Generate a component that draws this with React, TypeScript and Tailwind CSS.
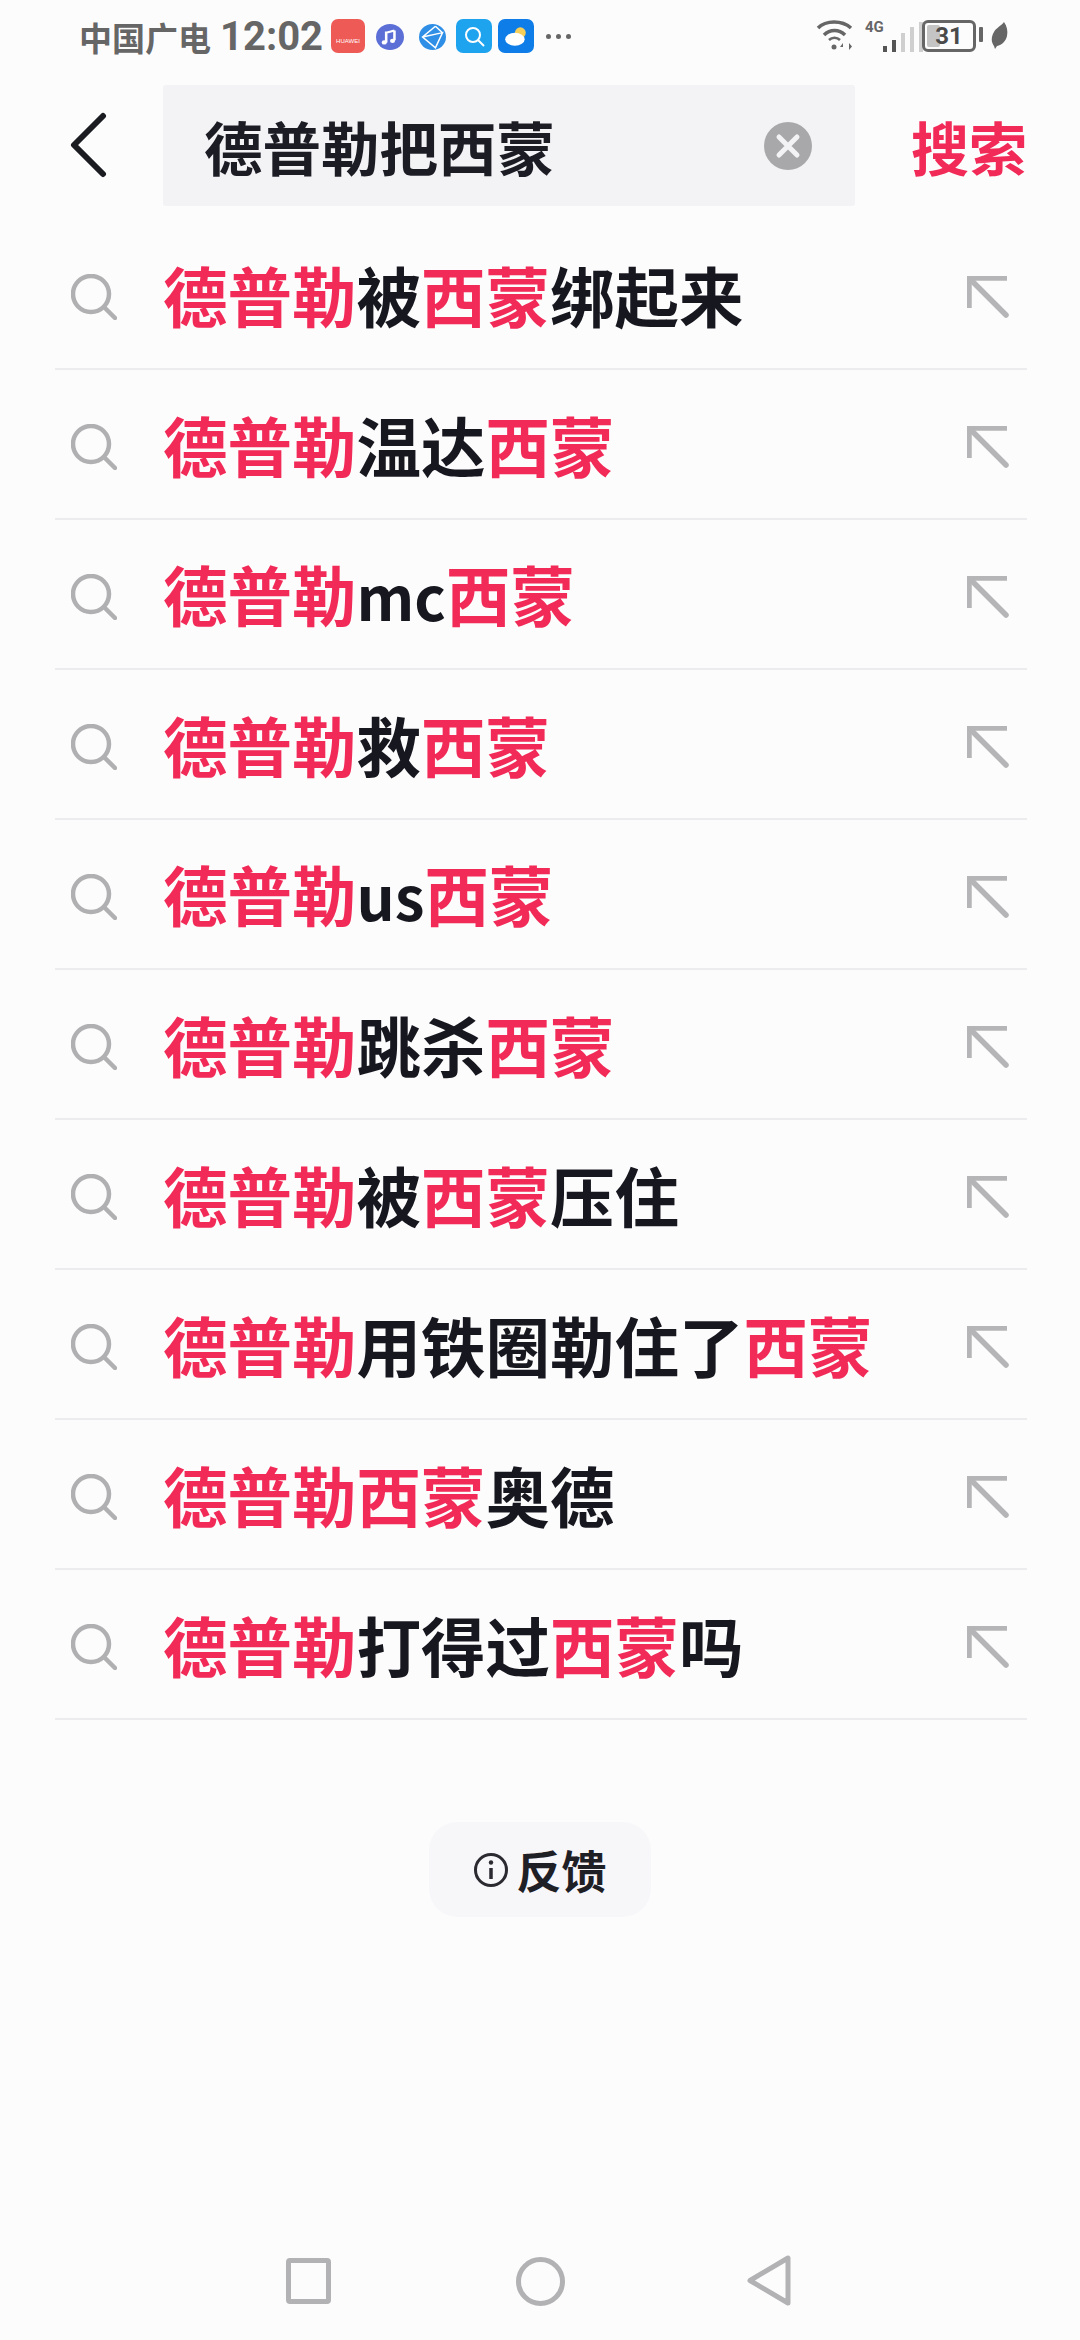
import React from "react";

const FONT = "[font-family:'Noto_Sans_CJK_SC','Noto_Sans',sans-serif]";

type Seg = [string, boolean];
const rows: Seg[][] = [
  [["德普勒", true], ["被", false], ["西蒙", true], ["绑起来", false]],
  [["德普勒", true], ["温达", false], ["西蒙", true]],
  [["德普勒", true], ["mc", false], ["西蒙", true]],
  [["德普勒", true], ["救", false], ["西蒙", true]],
  [["德普勒", true], ["us", false], ["西蒙", true]],
  [["德普勒", true], ["跳杀", false], ["西蒙", true]],
  [["德普勒", true], ["被", false], ["西蒙", true], ["压住", false]],
  [["德普勒", true], ["用铁圈勒住了", false], ["西蒙", true]],
  [["德普勒", true], ["西蒙", true], ["奥德", false]],
  [["德普勒", true], ["打得过", false], ["西蒙", true], ["吗", false]],
];

function StatusBar() {
  return (
    <div className="h-[85px] flex items-start pt-[19px] pl-[79px] pr-[72px] text-[#666666]">
      <span className="text-[33px] leading-[36px] font-bold w-[135px] whitespace-nowrap">中国广电</span>
      <span className="ml-[6px] text-[40px] leading-[36px] font-bold w-[111px] [font-family:'Roboto',sans-serif]">12:02</span>
      <div className="w-[34px] h-[34px] rounded-[7px] bg-[#ee5a55] flex items-end justify-center pb-[9px]">
        <span className="text-[6px] leading-[6px] text-white [font-family:'Liberation_Sans',sans-serif]">HUAWEI</span>
      </div>
      <svg className="ml-[11px] mt-[5px]" width="28" height="26" viewBox="0 0 22 24" preserveAspectRatio="none">
        <ellipse cx="11" cy="12" rx="11" ry="12" fill="#5b6fd6" />
        <path d="M8 7v10M14.5 6v9M8 8l6.500-2" stroke="#fff" strokeWidth="2" fill="none" />
        <circle cx="6.500" cy="17" r="2" fill="#fff" />
        <circle cx="13" cy="15.500" r="2" fill="#fff" />
      </svg>
      <svg className="ml-[15px] mt-[5px]" width="27" height="26" viewBox="0 0 23 24" preserveAspectRatio="none">
        <ellipse cx="11.500" cy="12" rx="11.500" ry="12" fill="#2f8fe6" />
        <path d="M14 2L3 12l11 10L20 8L3 12M14 2L20 8" stroke="#fff" strokeWidth="1.300" fill="none" />
      </svg>
      <div className="ml-[10px] w-[36px] h-[34px] rounded-[7px] bg-[#1ea3ee] flex items-center justify-center">
        <svg width="24" height="24" viewBox="0 0 22 24" fill="none" stroke="#fff" strokeWidth="2">
          <circle cx="10" cy="11" r="7" />
          <path d="M15 16l6 6" />
        </svg>
      </div>
      <div className="ml-[6px] w-[36px] h-[34px] rounded-[7px] bg-[#0e7de8] flex items-center justify-center">
        <svg width="28" height="26" viewBox="0 0 24 24">
          <circle cx="16" cy="9" r="5" fill="#f5cf5a" />
          <ellipse cx="11" cy="15" rx="9" ry="6" fill="#fff" />
        </svg>
      </div>
      <div className="ml-[12px] mt-[15px] flex gap-[5px]">
        <span className="w-[5px] h-[5px] rounded-full bg-[#666666]" />
        <span className="w-[5px] h-[5px] rounded-full bg-[#666666]" />
        <span className="w-[5px] h-[5px] rounded-full bg-[#666666]" />
      </div>
      <div className="flex-1" />
      <svg className="mr-[4px]" width="38" height="33" viewBox="0 0 38 33" fill="none" stroke="#666666" strokeWidth="3.500">
        <path d="M2 9C10 1 26 1 35 9" />
        <path d="M8 16C14 10 23 10 29 16" />
        <path d="M13 21C16 18 21 18 24 21" strokeWidth="2.500" />
        <circle cx="18" cy="28" r="2.500" fill="#666666" stroke="none" />
        <path d="M27 24l-3 4h3v3M33 24v7l3-3.500z" fill="#666666" stroke="none" />
      </svg>
      <div className="ml-[7px] relative w-[51px] h-[33px]">
        <span className="absolute left-0 top-0 text-[15px] leading-[16px] font-bold text-[#666666] [font-family:'Roboto',sans-serif]">4G</span>
        <div className="absolute left-[18px] bottom-0 flex items-end gap-[5px]">
          <span className="w-[4px] h-[6px] bg-[#555555]" />
          <span className="w-[4px] h-[12px] bg-[#555555]" />
          <span className="w-[4px] h-[19px] bg-[#cfcfcf]" />
          <span className="w-[4px] h-[25px] bg-[#cfcfcf]" />
          <span className="w-[4px] h-[30px] bg-[#cfcfcf]" />
        </div>
      </div>
      <div className="ml-[6px] w-[54px] h-[32px] border-[3px] border-[#666666] rounded-[6px] relative flex items-center justify-center mt-[1px]">
        <div className="absolute left-[2px] top-[2px] bottom-[2px] w-[13px] bg-[#c4c4c4] rounded-[2px]" />
        <span className="relative text-[24px] leading-[24px] font-bold text-[#4a4a4a] [font-family:'Roboto',sans-serif]">31</span>
      </div>
      <span className="ml-[3px] mt-[8px] w-[4px] h-[15px] rounded-[1px] bg-[#666666]" />
      <svg className="ml-[8px] mt-[3px]" width="17" height="27" viewBox="0 0 17 27">
        <path d="M13 0C16 4 17 9 16 14C15 19 11 23 6 24L4 27L3 24C0 20 0 15 3 10C5 6 10 4 13 0Z" fill="#666666" />
      </svg>
    </div>
  );
}

function Header() {
  return (
    <div className="h-[121px] flex items-center pl-[70px]">
      <svg className="w-[38px] h-[68px] shrink-0" viewBox="0 0 38 68" fill="none" stroke="#1b1c22" strokeWidth="6" strokeLinecap="round" strokeLinejoin="round">
        <path d="M33 4L4 33L33 62" />
      </svg>
      <div className="ml-[55px] w-[692px] h-[121px] bg-[#f3f2f5] rounded-[3px] flex items-center pl-[41px] pr-[43px]">
        <span className="flex-1 text-[58.500px] leading-[120px] font-bold text-[#1b1c24]">德普勒把西蒙</span>
        <svg className="w-[48px] h-[48px]" viewBox="0 0 48 48" fill="none">
          <circle cx="24" cy="24" r="24" fill="#a8a8aa" />
          <path d="M15 15L33 33M33 15L15 33" stroke="#f3f2f5" strokeWidth="5" strokeLinecap="round" />
        </svg>
      </div>
      <span className="ml-[56px] text-[58px] leading-[120px] font-bold text-[#f12a57] whitespace-nowrap">搜索</span>
    </div>
  );
}

function Row({ segs }: { segs: Seg[] }) {
  return (
    <div className="h-[150px] ml-[55px] mr-[53px] border-b-2 border-[#ececef] flex items-center pt-[6px] pr-[4px]">
      <svg className="ml-[16px] w-[46px] h-[46px] shrink-0" viewBox="0 0 46 46" fill="none" stroke="#b0b0b2" strokeWidth="4.500" strokeLinecap="round">
        <circle cx="20" cy="20" r="18" />
        <path d="M33 33L44 44" />
      </svg>
      <div className="ml-[46px] pb-[7px] flex-1 text-[64.500px] leading-[80px] font-bold whitespace-nowrap text-[#16171f]">
        {segs.map(([t, red], i) => (
          <span
            key={i}
            className={red ? "text-[#f12a57]" : /^[a-z]+$/.test(t) ? "text-[60px] text-[#16171f]" : "text-[#16171f]"}
          >
            {t}
          </span>
        ))}
      </div>
      <svg className="w-[42px] h-[42px] mr-[14px] shrink-0" viewBox="0 0 42 42" fill="none" stroke="#b5b5b7" strokeWidth="5.500" strokeLinecap="round">
        <path d="M40 2H2V32" strokeLinecap="butt" />
        <path d="M4 4L39 39" />
      </svg>
    </div>
  );
}

export default function App() {
  return (
    <div className={`w-[1080px] h-[2340px] bg-[#fdfcfd] flex flex-col ${FONT}`}>
      <StatusBar />
      <Header />
      <div className="mt-[14px] flex flex-col">
        {rows.map((r, i) => (
          <Row key={i} segs={r} />
        ))}
      </div>
      <div className="mt-[102px] self-center w-[222px] h-[95px] rounded-[28px] bg-[#f7f6f9] flex items-center justify-center gap-[7px]">
        <svg className="w-[36px] h-[36px]" viewBox="0 0 36 36" fill="none" stroke="#2a2a30" strokeWidth="3">
          <circle cx="18" cy="18" r="15.500" />
          <path d="M18 16V27" strokeWidth="3.500" />
          <circle cx="18" cy="10.500" r="2.200" fill="#2a2a30" stroke="none" />
        </svg>
        <span className="text-[45px] leading-[60px] font-bold text-[#1f2026]">反馈</span>
      </div>
      <div className="mt-auto h-[116px] flex items-start pt-[34px] pl-[286px]">
        <div className="w-[45px] h-[46px] border-[5px] border-[#b2b2b4] rounded-[4px]" />
        <div className="ml-[185px] w-[49px] h-[49px] border-[5px] border-[#b2b2b4] rounded-full -mt-[1px]" />
        <svg className="ml-[182px] -mt-[3px]" width="44" height="51" viewBox="0 0 44 51" fill="none" stroke="#b2b2b4" strokeWidth="5" strokeLinejoin="round">
          <path d="M41 3V48L3 25.500Z" />
        </svg>
      </div>
    </div>
  );
}
